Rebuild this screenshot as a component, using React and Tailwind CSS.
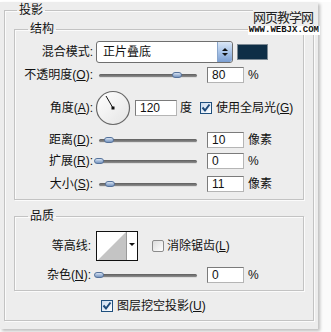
import React from "react"

const font = "font-[family-name:Liberation_Sans,Noto_Sans_CJK_SC,sans-serif]"

function Key({ children }) {
  return <span className="underline underline-offset-1">{children}</span>
}

function Label({ text, k, narrow }) {
  return (
    <div className={`${narrow ? "w-[76px]" : "w-[78px]"} shrink-0 text-right text-[12px] leading-[16px] text-[#111]`}>
      {text}
      {k ? <>(<Key>{k}</Key>)</> : null}:
    </div>
  )
}

function Slider({ value, ml = "ml-[6px]", w = "w-[98px]" }) {
  return (
    <div className={`relative ${ml} ${w} h-[8px] flex items-center`}>
      <div className="w-full h-[3px] rounded-full bg-gradient-to-b from-[#5e5e5e] to-[#8e8e8e] shadow-[0_1px_0_#dcdcdc]" />
      <div
        className="absolute top-[1px] w-[10px] h-[6px] -ml-[5px] rounded-full border border-[#56739c] bg-gradient-to-b from-[#d6e2f2] to-[#7896c0]"
        style={{ left: `${value * 100}%` }}
      />
    </div>
  )
}

function NumBox({ value, w = "w-[37px]", ml = "ml-[10px]" }) {
  return (
    <div className={`${ml} ${w} h-[16px] bg-white border border-[#7b7b7b] border-b-[#b5b5b5] border-r-[#b5b5b5] pl-[4px] text-[12px] leading-[14px] text-[#111]`}>
      {value}
    </div>
  )
}

function Check({ checked }) {
  if (!checked) {
    return (
      <div className="w-[12px] h-[12px] rounded-[2px] border border-[#8b8b8b] bg-gradient-to-br from-[#dcdcdc] to-[#ffffff]" />
    )
  }
  return (
    <div className="w-[12px] h-[12px] border border-[#1f4f7d] bg-gradient-to-br from-[#c9daee] to-[#ffffff] flex items-center justify-center">
      <svg width="10" height="10" viewBox="0 0 10 10">
        <path d="M1.5 4.5 L4 7.5 L8.5 1.5" fill="none" stroke="#1d4a7a" strokeWidth="2" />
      </svg>
    </div>
  )
}

function SliderRow({ label, k, value, pos, unit, mt, narrow }) {
  return (
    <div className={`flex items-center h-[16px] ${mt}`}>
      <Label text={label} k={k} narrow={narrow} />
      <Slider value={pos} ml={narrow ? "ml-[8px]" : "ml-[6px]"} />
      <NumBox value={value} />
      <div className="ml-[4px] text-[12px] leading-[16px] text-[#111]">{unit}</div>
    </div>
  )
}

function Group({ title, children, className = "" }) {
  return (
    <fieldset className={`w-[290px] border border-[#c3c3c3] shadow-[inset_1px_1px_0_#fbfbfb,1px_1px_0_#fbfbfb] ${className}`}>
      <legend className="ml-[13px] px-[2px] text-[12px] leading-[16px] text-[#111]">{title}</legend>
      {children}
    </fieldset>
  )
}

export default function App() {
  return (
    <div className={`w-[331px] h-[332px] bg-[#fbfbfb] ${font}`}>
      <div className="relative w-[318px] h-[327px] bg-[#ededed] shadow-[2px_2px_3px_rgba(0,0,0,0.25)]">
        <fieldset className="ml-[4px] mt-[2px] w-[310px] border border-[#c3c3c3] shadow-[inset_1px_1px_0_#fbfbfb,1px_1px_0_#fbfbfb] px-[9px] pb-[6px]">
          <legend className="ml-[3px] px-[2px] text-[12px] leading-[16px] text-[#111]">投影</legend>

          <Group title="结构" className="mt-[3px] pb-[7px]">
            <div className="flex items-center h-[22px] mt-[4px]">
              <Label text="混合模式" />
              <div className="ml-[3px] w-[137px] h-[22px] flex rounded-[3px] border border-[#6f6f6f] bg-white overflow-hidden">
                <div className="flex-1 pl-[6px] text-[12px] leading-[20px] text-[#111]">正片叠底</div>
                <div className="w-[15px] h-full flex flex-col items-center justify-center gap-[2px] rounded-r-[2px] border-l border-[#8aa6cc] bg-gradient-to-b from-[#dbe7f6] via-[#a9c4e8] to-[#7c9fd2]">
                  <div className="w-0 h-0 border-x-[3px] border-x-transparent border-b-[3px] border-b-[#111]" />
                  <div className="w-0 h-0 border-x-[3px] border-x-transparent border-t-[3px] border-t-[#111]" />
                </div>
              </div>
              <div className="ml-[4px] w-[31px] h-[16px] bg-[#0e2e46] border border-[#7d8a94]" />
            </div>

            <SliderRow label="不透明度" k="O" value="80" pos={0.8} unit="%" mt="mt-[4px]" />

            <div className="flex items-center h-[36px] mt-[7px]">
              <Label text="角度" k="A" />
              <svg className="ml-[2px]" width="36" height="36" viewBox="0 0 36 36">
                <defs>
                  <linearGradient id="dial" x1="0" y1="0" x2="1" y2="1">
                    <stop offset="0" stopColor="#ffffff" />
                    <stop offset="1" stopColor="#e4e4e4" />
                  </linearGradient>
                </defs>
                <circle cx="18" cy="18" r="16.5" fill="url(#dial)" stroke="#686868" strokeWidth="1.2" />
                <line x1="18" y1="18" x2="11" y2="6" stroke="#111" strokeWidth="1" />
                <rect x="16.5" y="16.5" width="3" height="3" fill="#111" />
              </svg>
              <NumBox value="120" w="w-[42px]" ml="ml-[4px]" />
              <div className="ml-[3px] text-[12px] leading-[16px] text-[#111]">度</div>
              <div className="ml-[8px]"><Check checked /></div>
              <div className="ml-[4px] text-[12px] leading-[16px] text-[#111]">
                使用全局光(<Key>G</Key>)
              </div>
            </div>

            <SliderRow label="距离" k="D" value="10" pos={0.1} unit="像素" mt="mt-[6px]" />
            <SliderRow label="扩展" k="R" value="0" pos={0} unit="%" mt="mt-[5px]" />
            <SliderRow label="大小" k="S" value="11" pos={0.11} unit="像素" mt="mt-[7px]" />
          </Group>

          <Group title="品质" className="mt-[8px] pb-[7px]">
            <div className="flex items-center h-[30px] mt-[7px]">
              <Label text="等高线" narrow />
              <div className="ml-[5px] w-[42px] h-[30px] flex border border-[#111] bg-white">
                <svg width="29" height="28" viewBox="0 0 29 28">
                  <polygon points="1,28 29,0 29,28" fill="#c4c4c4" />
                </svg>
                <div className="flex-1 border-l border-[#9a9a9a] flex justify-center pt-[11px]">
                  <div className="w-0 h-0 border-x-[3px] border-x-transparent border-t-[3px] border-t-[#111]" />
                </div>
              </div>
              <div className="ml-[14px]"><Check /></div>
              <div className="ml-[3px] text-[12px] leading-[16px] text-[#111]">
                消除锯齿(<Key>L</Key>)
              </div>
            </div>
            <SliderRow label="杂色" k="N" value="0" pos={0} unit="%" mt="mt-[6px]" narrow />
          </Group>

          <div className="flex items-center h-[16px] mt-[7px] pl-[87px]">
            <Check checked />
            <div className="ml-[4px] text-[12px] leading-[16px] text-[#111]">
              图层挖空投影(<Key>U</Key>)
            </div>
          </div>
        </fieldset>

        <div className="absolute top-[8px] right-[0px] flex flex-col items-end">
          <div className="pr-[5px] text-[13px] leading-[15px] tracking-[-1px] text-[#222] bg-[#ededed]">网页教学网</div>
          <div className="mt-[1px] -mr-[2px] px-[1px] bg-white font-[family-name:Liberation_Mono,monospace] font-bold text-[9px] leading-[9px] text-[#111]">
            WWW.WEBJX.COM
          </div>
        </div>
      </div>
    </div>
  )
}
